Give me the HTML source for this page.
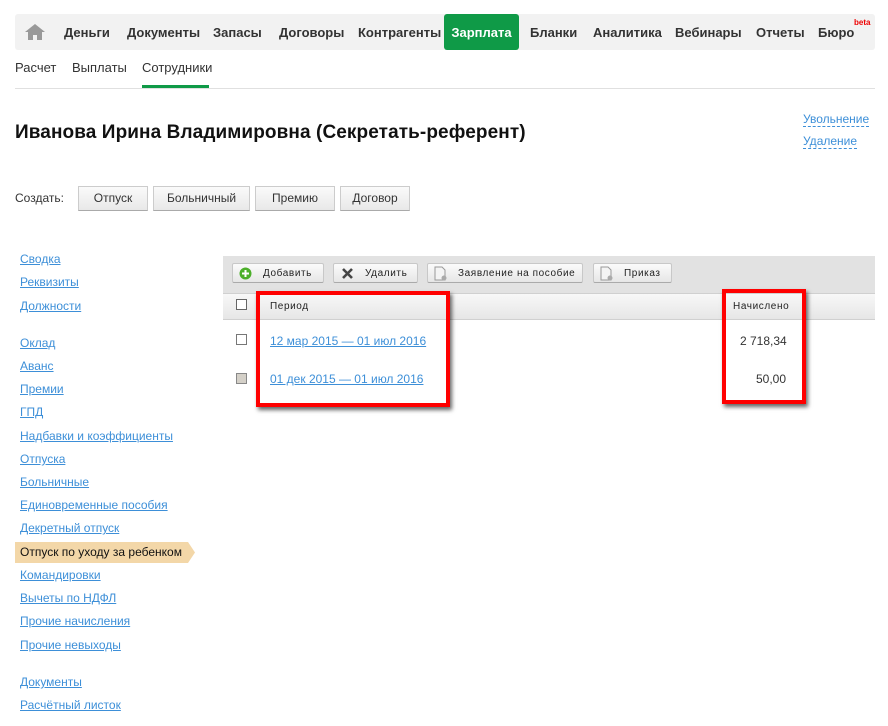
<!DOCTYPE html>
<html><head><meta charset="utf-8"><style>
*{margin:0;padding:0;box-sizing:border-box}
body{width:888px;height:726px;background:#fff;font-family:"Liberation Sans",Arial,sans-serif;position:relative;overflow:hidden;color:#222}
.abs{position:absolute}
.nav{left:15px;top:14px;width:860px;height:36px;background:#f2f2f2;border-radius:3px}
.nav span{position:absolute;top:11px;font-size:13px;font-weight:bold;color:#333;white-space:nowrap}
.zp{position:absolute;left:444px;top:14px;width:75px;height:36px;background:#0f9a47;border-radius:3px;color:#fff;font-weight:bold;font-size:13px;text-align:center;line-height:38px}
.sub{top:60px;font-size:13px;color:#333}
a,.lnk{color:#3d8fd8;text-decoration:underline}
.side{left:20px;font-size:12px;position:absolute;color:#3d8fd8;text-decoration:underline;white-space:nowrap}
.btn{position:absolute;top:186px;height:25px;background:linear-gradient(#fafafa,#e8e8e8);border:1px solid #ccc;border-bottom-color:#aaa;font-size:12px;color:#333;text-align:center;line-height:23px}
.tb{position:absolute;top:263px;height:20px;background:linear-gradient(#fbfbfb,#e6e6e6);border:1px solid #c8c8c8;border-bottom-color:#aaa;font-size:10px;letter-spacing:.6px;color:#222;line-height:20px;border-radius:2px}
.cb{position:absolute;width:11px;height:11px;border:1px solid #666;background:#fff}
.red{position:absolute;border:4px solid #f00;box-shadow:2px 3px 4px rgba(0,0,0,.6)}
</style></head><body>
<div class="abs nav">
<svg style="position:absolute;left:10px;top:10px" width="20" height="16" viewBox="0 0 20 16"><path d="M10 0L0 8h3v8h5v-5h4v5h5V8h3z" fill="#999"/></svg>
<span style="left:49px">Деньги</span><span style="left:112px">Документы</span><span style="left:198px">Запасы</span><span style="left:264px">Договоры</span><span style="left:343px">Контрагенты</span>
<span style="left:515px">Бланки</span><span style="left:578px">Аналитика</span><span style="left:660px">Вебинары</span><span style="left:741px">Отчеты</span><span style="left:803px">Бюро</span><span style="left:839px;top:4px;font-size:8px;color:#e00">beta</span>
</div>
<div class="zp">Зарплата</div>
<div class="abs sub" style="left:15px">Расчет</div>
<div class="abs sub" style="left:72px">Выплаты</div>
<div class="abs sub" style="left:142px">Сотрудники</div>
<div class="abs" style="left:142px;top:85px;width:67px;height:3px;background:#0f9a47"></div>
<div class="abs" style="left:15px;top:88px;width:860px;height:1px;background:#e0e0e0"></div>
<div class="abs" style="left:15px;top:122px;font-size:19px;font-weight:bold;color:#111;letter-spacing:.1px">Иванова Ирина Владимировна (Секретать-референт)</div>
<div class="abs" style="left:803px;top:112px;font-size:12px;color:#3d8fd8;border-bottom:1px dashed #3d8fd8;line-height:14px">Увольнение</div>
<div class="abs" style="left:803px;top:134px;font-size:12px;color:#3d8fd8;border-bottom:1px dashed #3d8fd8;line-height:14px">Удаление</div>
<div class="abs" style="left:15px;top:191px;font-size:12px;color:#333">Создать:</div>
<div class="btn" style="left:78px;width:70px">Отпуск</div>
<div class="btn" style="left:153px;width:97px">Больничный</div>
<div class="btn" style="left:255px;width:80px">Премию</div>
<div class="btn" style="left:340px;width:70px">Договор</div>

<div class="side" style="top:252px">Сводка</div>
<div class="side" style="top:275px">Реквизиты</div>
<div class="side" style="top:299px">Должности</div>
<div class="side" style="top:336px">Оклад</div>
<div class="side" style="top:359px">Аванс</div>
<div class="side" style="top:382px">Премии</div>
<div class="side" style="top:405px">ГПД</div>
<div class="side" style="top:429px">Надбавки и коэффициенты</div>
<div class="side" style="top:452px">Отпуска</div>
<div class="side" style="top:475px">Больничные</div>
<div class="side" style="top:498px">Единовременные пособия</div>
<div class="side" style="top:521px">Декретный отпуск</div>
<svg class="abs" style="left:15px;top:542px" width="180" height="21"><polygon points="0,0 173,0 180,10.5 173,21 0,21" fill="#f3d7a8"/></svg>
<div class="side" style="top:545px;color:#111;text-decoration:none">Отпуск по уходу за ребенком</div>
<div class="side" style="top:568px">Командировки</div>
<div class="side" style="top:591px">Вычеты по НДФЛ</div>
<div class="side" style="top:614px">Прочие начисления</div>
<div class="side" style="top:638px">Прочие невыходы</div>
<div class="side" style="top:675px">Документы</div>
<div class="side" style="top:698px">Расчётный листок</div>

<div class="abs" style="left:223px;top:256px;width:652px;height:37px;background:#e2e2e2"></div>
<div class="tb" style="left:232px;width:92px"><svg style="position:absolute;left:6px;top:3px" width="13" height="13"><circle cx="6.5" cy="6.5" r="6" fill="#4caf2a"/><path d="M6.5 3v7M3 6.5h7" stroke="#fff" stroke-width="2"/></svg><span style="position:absolute;left:30px">Добавить</span></div>
<div class="tb" style="left:333px;width:85px"><svg style="position:absolute;left:8px;top:4px" width="11" height="11"><path d="M1 1l9 9M10 1l-9 9" stroke="#444" stroke-width="2.6"/></svg><span style="position:absolute;left:31px">Удалить</span></div>
<div class="tb" style="left:427px;width:156px"><svg style="position:absolute;left:6px;top:2px" width="14" height="15"><path d="M1 1h7l3 3v10H1z" fill="#f4f4f4" stroke="#999"/><circle cx="10" cy="12" r="2.5" fill="#aaa"/></svg><span style="position:absolute;left:30px">Заявление на пособие</span></div>
<div class="tb" style="left:593px;width:79px"><svg style="position:absolute;left:6px;top:2px" width="14" height="15"><path d="M1 1h7l3 3v10H1z" fill="#f4f4f4" stroke="#999"/><circle cx="10" cy="12" r="2.5" fill="#aaa"/></svg><span style="position:absolute;left:30px">Приказ</span></div>
<div class="abs" style="left:223px;top:293px;width:652px;height:27px;background:linear-gradient(#f8f8f8,#e6e6e6);border-top:1px solid #d0d0d0;border-bottom:1px solid #d0d0d0"></div>
<div class="cb" style="left:236px;top:299px"></div>
<div class="abs" style="left:270px;top:301px;font-size:10px;letter-spacing:.6px">Период</div>
<div class="abs" style="left:733px;top:301px;font-size:10px;letter-spacing:.6px">Начислено</div>
<div class="cb" style="left:236px;top:334px;border-color:#777"></div>
<div class="cb" style="left:236px;top:373px;background:#d4d0c8;border-color:#888"></div>
<div class="abs lnk" style="left:270px;top:334px;font-size:12px">12 мар 2015 — 01 июл 2016</div>
<div class="abs lnk" style="left:270px;top:372px;font-size:12px">01 дек 2015 — 01 июл 2016</div>
<div class="abs" style="left:740px;top:334px;font-size:12px;color:#333">2 718,34</div>
<div class="abs" style="left:756px;top:372px;font-size:12px;color:#333">50,00</div>
<div class="red" style="left:256px;top:291px;width:194px;height:116px"></div>
<div class="red" style="left:722px;top:289px;width:84px;height:115px"></div>
</body></html>
